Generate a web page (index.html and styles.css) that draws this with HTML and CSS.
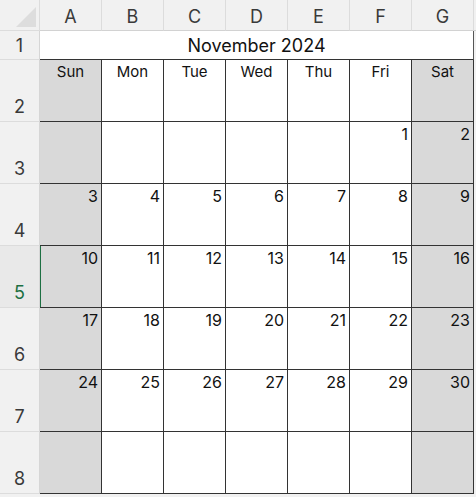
FILE: index.html
```html
<!DOCTYPE html>
<html>
<head>
<meta charset="utf-8">
<link rel="stylesheet" href="styles.css">
</head>
<body>
<div class="sheet">
  <div class="corner"><span class="tri"></span></div>
  <div class="colhead">A</div>
  <div class="colhead">B</div>
  <div class="colhead">C</div>
  <div class="colhead">D</div>
  <div class="colhead">E</div>
  <div class="colhead">F</div>
  <div class="colhead">G</div>
  <div class="colhead end"></div>

  <div class="rowhead r1">1</div>
  <div class="title">November 2024</div>
  <div class="edge"></div>

  <div class="rowhead">2</div>
  <div class="cell wk day">Sun</div>
  <div class="cell day">Mon</div>
  <div class="cell day">Tue</div>
  <div class="cell day">Wed</div>
  <div class="cell day">Thu</div>
  <div class="cell day">Fri</div>
  <div class="cell wk day">Sat</div>
  <div class="edge"></div>

  <div class="rowhead">3</div>
  <div class="cell wk"></div>
  <div class="cell"></div>
  <div class="cell"></div>
  <div class="cell"></div>
  <div class="cell"></div>
  <div class="cell">1</div>
  <div class="cell wk">2</div>
  <div class="edge"></div>

  <div class="rowhead">4</div>
  <div class="cell wk">3</div>
  <div class="cell">4</div>
  <div class="cell">5</div>
  <div class="cell">6</div>
  <div class="cell">7</div>
  <div class="cell">8</div>
  <div class="cell wk">9</div>
  <div class="edge"></div>

  <div class="rowhead active">5</div>
  <div class="cell wk sel">10</div>
  <div class="cell">11</div>
  <div class="cell">12</div>
  <div class="cell">13</div>
  <div class="cell">14</div>
  <div class="cell">15</div>
  <div class="cell wk">16</div>
  <div class="edge"></div>

  <div class="rowhead">6</div>
  <div class="cell wk">17</div>
  <div class="cell">18</div>
  <div class="cell">19</div>
  <div class="cell">20</div>
  <div class="cell">21</div>
  <div class="cell">22</div>
  <div class="cell wk">23</div>
  <div class="edge"></div>

  <div class="rowhead">7</div>
  <div class="cell wk">24</div>
  <div class="cell">25</div>
  <div class="cell">26</div>
  <div class="cell">27</div>
  <div class="cell">28</div>
  <div class="cell">29</div>
  <div class="cell wk">30</div>
  <div class="edge"></div>

  <div class="rowhead">8</div>
  <div class="cell wk"></div>
  <div class="cell"></div>
  <div class="cell"></div>
  <div class="cell"></div>
  <div class="cell"></div>
  <div class="cell"></div>
  <div class="cell wk"></div>
  <div class="edge"></div>
</div>
</body>
</html>
```

FILE: styles.css
```css
html, body {
  margin: 0;
  padding: 0;
  background: #f1f1f1;
  font-family: "Inter", "Liberation Sans", sans-serif;
  color: #111;
}

.sheet {
  display: grid;
  grid-template-columns: 40px repeat(7, 62px) 2px;
  grid-template-rows: 31px 29px repeat(7, 62px);
  width: 476px;
}

.corner {
  background: #f1f1f1;
  border-right: 1px solid #dcdcdc;
  border-bottom: 1px solid #dcdcdc;
  position: relative;
}

.tri {
  position: absolute;
  right: 3px;
  bottom: 3px;
  width: 0;
  height: 0;
  border-left: 20px solid transparent;
  border-bottom: 20px solid #dddddd;
}

.colhead {
  background: #f1f1f1;
  border-right: 1px solid #dcdcdc;
  border-bottom: 1px solid #d2d2d2;
  display: flex;
  align-items: center;
  justify-content: center;
  font-size: 18px;
  color: #3a3a3a;
  padding-top: 3px;
  box-sizing: border-box;
}

.colhead.end {
  border-right: none;
}

.rowhead {
  background: #f1f1f1;
  border-right: 1px solid #d6d6d6;
  border-bottom: 1px solid #dcdcdc;
  display: flex;
  align-items: flex-end;
  justify-content: center;
  font-size: 18px;
  color: #3a3a3a;
  padding-bottom: 4px;
  box-sizing: border-box;
}

.rowhead.r1 {
  align-items: center;
  padding-bottom: 0;
}

.rowhead.active {
  background: #e9e9e9;
  color: #1d6f42;
}

.title {
  grid-column: span 7;
  background: #fff;
  border-right: 1px solid #555;
  border-bottom: 1px solid #333;
  display: flex;
  align-items: center;
  justify-content: center;
  font-size: 18px;
  color: #111;
  box-sizing: border-box;
}

.edge {
  background: #f1f1f1;
}

.cell {
  background: #fff;
  border-right: 1px solid #333;
  border-bottom: 1px solid #333;
  box-sizing: border-box;
  font-size: 16px;
  text-align: right;
  padding: 2px 3px 0 0;
  line-height: 20px;
  color: #111;
}

.cell.day {
  text-align: center;
  padding: 2px 0 0 0;
  font-size: 15px;
}

.cell.wk {
  background: #d9d9d9;
}

.cell.sel {
  box-shadow: inset 1px 0 0 #1d6f42;
}
```
